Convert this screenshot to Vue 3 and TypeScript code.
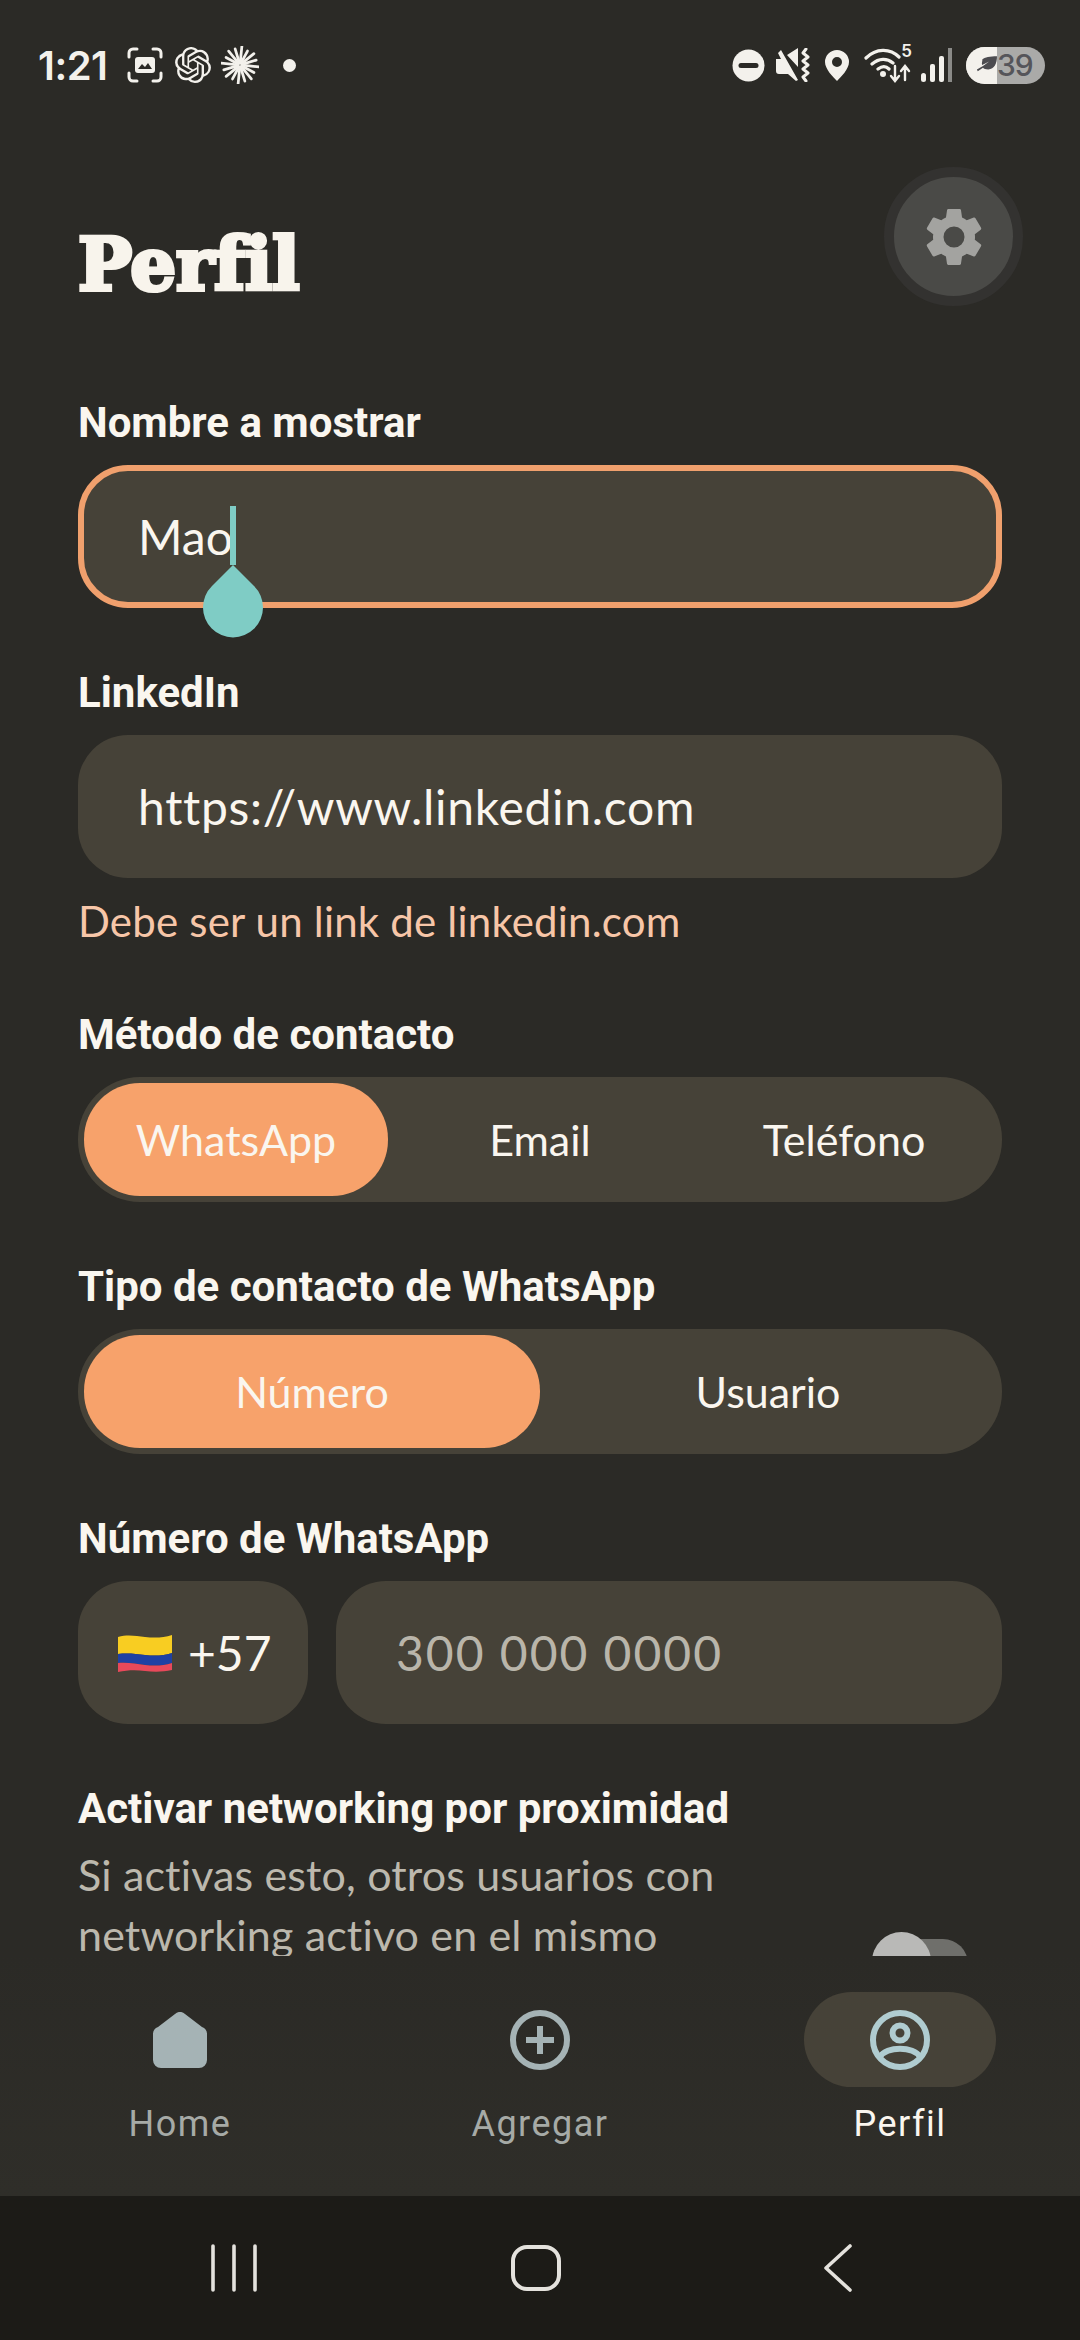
<script setup lang="ts">
const rays: number[][] = Array.from({ length: 16 }, (_, i) => {
  const a = (i * Math.PI) / 8 + 0.1
  const r = [18, 15, 17, 16][i % 4]
  return [18 + 2 * Math.cos(a), 18 + 2 * Math.sin(a), 18 + r * Math.cos(a), 18 + r * Math.sin(a)]
})
</script>

<template>
  <div class="screen">
    <header class="status">
      <div class="status-left">
        <span class="time">1:21</span>
        <svg class="capture" viewBox="0 0 36 36" fill="none">
          <path d="M2 10V6a4 4 0 0 1 4-4h4M26 2h4a4 4 0 0 1 4 4v4M34 26v4a4 4 0 0 1-4 4h-4M10 34H6a4 4 0 0 1-4-4v-4" stroke="#f3f1ec" stroke-width="3" stroke-linecap="round" />
          <rect x="8" y="10" width="20" height="16" rx="3" fill="#f3f1ec" />
          <path d="M11 22l4-5 3 3 3-4 4 6z" fill="#2b2a26" />
        </svg>
        <svg class="openai" viewBox="0 0 24 24" fill="#f3f1ec">
          <path d="M22.2819 9.8211a5.9847 5.9847 0 0 0-.5157-4.9108 6.0462 6.0462 0 0 0-6.5098-2.9A6.0651 6.0651 0 0 0 4.9807 4.1818a5.9847 5.9847 0 0 0-3.9977 2.9 6.0462 6.0462 0 0 0 .7427 7.0966 5.98 5.98 0 0 0 .511 4.9107 6.051 6.051 0 0 0 6.5146 2.9001A5.9847 5.9847 0 0 0 13.2599 24a6.0557 6.0557 0 0 0 5.7718-4.2058 5.9894 5.9894 0 0 0 3.9977-2.9001 6.0557 6.0557 0 0 0-.7475-7.0729zm-9.022 12.6081a4.4755 4.4755 0 0 1-2.8764-1.0408l.1419-.0804 4.7783-2.7582a.7948.7948 0 0 0 .3927-.6813v-6.7369l2.02 1.1686a.071.071 0 0 1 .038.052v5.5826a4.504 4.504 0 0 1-4.4945 4.4944zm-9.6607-4.1254a4.4708 4.4708 0 0 1-.5346-3.0137l.142.0852 4.783 2.7582a.7712.7712 0 0 0 .7806 0l5.8428-3.3685v2.3324a.0804.0804 0 0 1-.0332.0615L9.74 19.9502a4.4992 4.4992 0 0 1-6.1408-1.6464zM2.3408 7.8956a4.485 4.485 0 0 1 2.3655-1.9728V11.6a.7664.7664 0 0 0 .3879.6765l5.8144 3.3543-2.0201 1.1685a.0757.0757 0 0 1-.071 0l-4.8303-2.7865A4.504 4.504 0 0 1 2.3408 7.872zm16.5963 3.8558L13.1038 8.364 15.1192 7.2a.0757.0757 0 0 1 .071 0l4.8303 2.7913a4.4944 4.4944 0 0 1-.6765 8.1042v-5.6772a.79.79 0 0 0-.407-.667zm2.0107-3.0231l-.142-.0852-4.7735-2.7818a.7759.7759 0 0 0-.7854 0L9.409 9.2297V6.8974a.0662.0662 0 0 1 .0284-.0615l4.8303-2.7866a4.4992 4.4992 0 0 1 6.6802 4.66zM8.3065 12.863l-2.02-1.1638a.0804.0804 0 0 1-.038-.0567V6.0742a4.4992 4.4992 0 0 1 7.3757-3.4537l-.142.0805L8.704 5.459a.7948.7948 0 0 0-.3927.6813zm1.0976-2.3654l2.602-1.4998 2.6069 1.4998v2.9994l-2.5974 1.4997-2.6067-1.4997Z" />
        </svg>
        <svg class="spark" viewBox="0 0 36 36" stroke="#f3f1ec" stroke-width="2.6" stroke-linecap="round">
          <line v-for="(r, i) in rays" :key="i" :x1="r[0]" :y1="r[1]" :x2="r[2]" :y2="r[3]" />
        </svg>
        <span class="dot"></span>
      </div>
      <div class="status-right">
        <svg class="i-dnd" viewBox="0 0 33 33">
          <circle cx="16.5" cy="16.5" r="16" fill="#f3f1ec" />
          <rect x="6.5" y="14" width="20" height="5" rx="2.5" fill="#2b2a26" />
        </svg>
        <svg class="i-mute" viewBox="0 0 36 34" fill="none">
          <path d="M0 11h5L2 5l3-3 17 30-2 1-8-7H3a3 3 0 0 1-3-3z M11 7l11-7v19z" fill="#f3f1ec" />
          <path d="M30 1l-3 4 5 4-5 4 5 4-5 4 5 4-5 4 3 4" stroke="#f3f1ec" stroke-width="3" stroke-linecap="round" stroke-linejoin="round" />
        </svg>
        <svg class="i-pin" viewBox="0 0 24 31">
          <path fill-rule="evenodd" d="M12 0a12 12 0 0 1 12 12c0 7-8 15-12 19C8 27 0 19 0 12A12 12 0 0 1 12 0zm0 7a5 5 0 1 0 0 10 5 5 0 0 0 0-10z" fill="#f3f1ec" />
        </svg>
        <div class="wifi-wrap">
          <svg class="i-wifi" viewBox="0 0 48 36" fill="none" stroke="#f3f1ec" stroke-linecap="round">
            <path d="M2 11C12 1 26 1 35 10M8 17c7-6 15-6 21-1M14 22c4-3 8-3 11 0" stroke-width="3.2" />
            <circle cx="19" cy="27" r="3" fill="#f3f1ec" stroke="none" />
            <path d="M31 19v14M27 29l4 5 4-5M41 33V20M37 24l4-5 4 5" stroke-width="2.4" />
          </svg>
          <span class="wifi-num">5</span>
        </div>
        <svg class="i-signal" viewBox="0 0 31 34">
          <rect x="0" y="25" width="5" height="9" rx="2.5" fill="#f3f1ec" />
          <rect x="9" y="16" width="5" height="18" rx="2" fill="#f3f1ec" />
          <rect x="18" y="8" width="5" height="26" rx="2" fill="#f3f1ec" />
          <rect x="27" y="0" width="4" height="34" fill="#8b8b88" />
        </svg>
        <div class="battery">
          <span class="batt-fill">
            <svg viewBox="0 0 24 20" class="leaf">
              <path d="M7 4C10 1 16 0 24 0c0 8-3 15-10 15-3 0-5-1-6-2l-6 4-1-2 7-4 7-5-8 4c-1-3 1-5 0-6z" fill="#4c4c50" />
            </svg>
          </span>
          <span class="batt-num">39</span>
        </div>
      </div>
    </header>

    <main class="scroll">
      <h1 class="title">Perfil</h1>
      <button class="gear" type="button" aria-label="Ajustes">
        <svg viewBox="0 0 24 24" class="gear-i">
          <path fill-rule="evenodd" d="M19.14 12.94c.04-.3.06-.61.06-.94s-.02-.64-.07-.94l2.03-1.58a.5.5 0 0 0 .12-.61l-1.92-3.32a.5.5 0 0 0-.59-.22l-2.39.96a7 7 0 0 0-1.62-.94l-.36-2.54a.48.48 0 0 0-.48-.41h-3.84a.47.47 0 0 0-.47.41l-.36 2.54c-.59.24-1.13.57-1.62.94l-2.39-.96a.5.5 0 0 0-.59.22L2.74 8.87a.48.48 0 0 0 .12.61l2.03 1.58c-.05.3-.09.63-.09.94s.02.64.07.94l-2.03 1.58a.5.5 0 0 0-.12.61l1.92 3.32c.12.22.37.29.59.22l2.39-.96c.5.38 1.03.7 1.62.94l.36 2.54c.05.24.24.41.48.41h3.84c.24 0 .44-.17.47-.41l.36-2.54a7 7 0 0 0 1.62-.94l2.39.96c.22.08.47 0 .59-.22l1.92-3.32a.48.48 0 0 0-.12-.61zM12 15.6a3.6 3.6 0 1 1 0-7.2 3.6 3.6 0 0 1 0 7.2z" fill="#a3a3a0" />
        </svg>
      </button>

      <div class="form">
        <section class="field">
          <label class="label">Nombre a mostrar</label>
          <div class="input focus">
            <span class="value">Mao</span>
            <span class="caret"></span>
            <svg class="handle" viewBox="0 0 60 71">
              <path d="M30 0L51 21A30 30 0 1 1 9 21z" fill="#7fccc5" />
            </svg>
          </div>
        </section>

        <section class="field">
          <label class="label">LinkedIn</label>
          <div class="input"><span class="value link">https://www.linkedin.com</span></div>
          <p class="error">Debe ser un link de linkedin.com</p>
        </section>

        <section class="field">
          <label class="label">Método de contacto</label>
          <div class="segment">
            <span class="seg active">WhatsApp</span>
            <span class="seg">Email</span>
            <span class="seg">Teléfono</span>
          </div>
        </section>

        <section class="field">
          <label class="label">Tipo de contacto de WhatsApp</label>
          <div class="segment two">
            <span class="seg active">Número</span>
            <span class="seg">Usuario</span>
          </div>
        </section>

        <section class="field">
          <label class="label">Número de WhatsApp</label>
          <div class="phone">
            <div class="input country">
              <svg class="flag" viewBox="0 0 54 38">
                <path d="M0 3C10 0 18 2 27 3s18 1 27-2v18C45 22 36 22 27 21S10 19 0 20z" fill="#f8cd22" />
                <path d="M0 20C10 19 18 20 27 21s18 1 27-2v10c-9 3-18 3-27 2S10 28 0 29z" fill="#1f41a3" />
                <path d="M0 29c10-1 18 1 27 2s18 1 27-2v7c-9 2-18 2-27 1S10 36 0 38z" fill="#e8495a" />
              </svg>
              <span class="code">+57</span>
            </div>
            <div class="input number"><span class="placeholder">300 000 0000</span></div>
          </div>
        </section>

        <section class="field network">
          <div class="network-text">
            <label class="label tight">Activar networking por proximidad</label>
            <p class="desc">Si activas esto, otros usuarios con networking activo en el mismo</p>
          </div>
          <div class="toggle"><span class="track"></span><span class="thumb"></span></div>
        </section>
      </div>
    </main>

    <nav class="tabs">
      <div class="tab">
        <span class="tab-icon">
          <svg viewBox="0 0 54 56" class="ic-home">
            <path d="M22 2a7 7 0 0 1 10 0L49 15a8 8 0 0 1 5 8V48a8 8 0 0 1-8 8H8a8 8 0 0 1-8-8V23a8 8 0 0 1 5-8z" fill="#a5b3b5" />
          </svg>
        </span>
        <span class="tab-label">Home</span>
      </div>
      <div class="tab">
        <span class="tab-icon">
          <svg viewBox="0 0 60 60" class="ic" fill="none" stroke="#a5b3b5" stroke-width="6">
            <circle cx="30" cy="30" r="27" />
            <path d="M30 16v28M16 30h28" />
          </svg>
        </span>
        <span class="tab-label">Agregar</span>
      </div>
      <div class="tab on">
        <span class="tab-icon">
          <svg viewBox="0 0 60 60" class="ic" fill="none" stroke="#b0ccd0" stroke-width="6">
            <circle cx="30" cy="30" r="27" />
            <circle cx="30" cy="23" r="7.5" />
            <path d="M10 47C16 36 44 36 50 47" />
          </svg>
        </span>
        <span class="tab-label">Perfil</span>
      </div>
    </nav>

    <footer class="sysbar">
      <svg class="sys" viewBox="0 0 60 48" fill="none" stroke="#e4e2dd" stroke-width="3.6" stroke-linecap="round">
        <path d="M9 2v44M30 2v44M51 2v44" />
      </svg>
      <svg class="sys" viewBox="0 0 60 48" fill="none" stroke="#e4e2dd" stroke-width="4">
        <rect x="7" y="3" width="46" height="42" rx="14" />
      </svg>
      <svg class="sys" viewBox="0 0 60 48" fill="none" stroke="#e4e2dd" stroke-width="3.6" stroke-linecap="round" stroke-linejoin="round">
        <path d="M42 2L18 24l24 22" />
      </svg>
    </footer>
  </div>
</template>

<style>
html, body { margin: 0; background: #2b2a26; }
</style>

<style scoped>
.screen {
  width: 1080px;
  height: 2340px;
  display: flex;
  flex-direction: column;
  background: #2b2a26;
  color: #faf6ef;
  font-family: Lato, "Noto Sans", sans-serif;
  overflow: hidden;
}
.status {
  height: 130px;
  flex: none;
  display: flex;
  justify-content: space-between;
  align-items: center;
  padding: 0 35px 0 38px;
  box-sizing: border-box;
}
.status-left, .status-right { display: flex; align-items: center; }
.time {
  font-family: Inter, Roboto, sans-serif;
  font-weight: 600;
  font-size: 40px;
  width: 89px;
  color: #f3f1ec;
  letter-spacing: -0.5px;
}
.capture { width: 36px; height: 36px; }
.openai { width: 36px; height: 36px; margin-left: 12px; }
.spark { width: 38px; height: 38px; margin-left: 10px; }
.dot { width: 13px; height: 13px; border-radius: 50%; background: #f3f1ec; margin-left: 24px; }
.i-dnd { width: 33px; height: 33px; }
.i-mute { width: 36px; height: 34px; margin-left: 11px; }
.i-pin { width: 24px; height: 31px; margin-left: 13px; }
.wifi-wrap { position: relative; width: 48px; height: 36px; margin-left: 15px; }
.i-wifi { width: 48px; height: 36px; display: block; }
.wifi-num {
  position: absolute;
  right: 0;
  top: -6px;
  font-family: Inter, Roboto, sans-serif;
  font-weight: 600;
  font-size: 17px;
  line-height: 20px;
  color: #f3f1ec;
}
.i-signal { width: 31px; height: 34px; margin-left: 9px; }
.battery {
  margin-left: 14px;
  width: 79px;
  height: 37px;
  border-radius: 18.5px;
  overflow: hidden;
  display: flex;
  background: #aaaaa8;
}
.batt-fill {
  width: 31px;
  background: #f3f1ec;
  display: flex;
  align-items: center;
  justify-content: flex-end;
}
.leaf { width: 21px; height: 18px; }
.batt-num {
  font-family: Inter, Roboto, sans-serif;
  font-weight: 500;
  font-size: 30px;
  line-height: 37px;
  color: #55555a;
  letter-spacing: -1px;
}

.scroll {
  position: relative;
  flex: 1;
  min-height: 0;
  overflow: hidden;
  padding: 0 78px;
}
.title {
  margin: 93px 0 0;
  height: 179px;
  font-family: "DejaVu Serif", serif;
  font-weight: 700;
  font-size: 72px;
  line-height: 84px;
  font-variant-ligatures: none;
  color: #f8f4ec;
  -webkit-text-stroke: 4px #f8f4ec;
}
.gear {
  position: absolute;
  top: 37px;
  left: 884px;
  width: 139px;
  height: 139px;
  box-sizing: border-box;
  border: 10px solid #333230;
  border-radius: 50%;
  background: #4a4a47;
  padding: 0;
  display: flex;
  align-items: center;
  justify-content: center;
}
.gear-i { width: 70px; height: 70px; }

.form { display: flex; flex-direction: column; gap: 64px; }
.field { display: flex; flex-direction: column; }
.label {
  display: block;
  font-family: Roboto, sans-serif;
  font-weight: 700;
  font-size: 42px;
  line-height: 42px;
  margin-bottom: 21px;
  color: #faf6ef;
}
.label.tight { margin-bottom: 15px; }
.input {
  position: relative;
  height: 143px;
  box-sizing: border-box;
  border-radius: 50px;
  background: #464238;
  padding: 0 60px;
  display: flex;
  align-items: center;
  font-size: 48px;
}
.input.focus {
  border: 6px solid #f0a06d;
  padding: 0 54px;
  border-radius: 50px;
}
.value { color: #faf6ef; }
.value.link { letter-spacing: 0.7px; }
.caret {
  position: absolute;
  left: 146px;
  top: 35px;
  width: 6px;
  height: 59px;
  background: #7fccc5;
}
.handle {
  position: absolute;
  left: 119px;
  top: 94px;
  width: 60px;
  height: 71px;
  overflow: visible;
}
.error {
  margin: 22px 0 8px;
  font-size: 42px;
  line-height: 42px;
  letter-spacing: 0.2px;
  color: #f7c6a8;
}
.segment {
  height: 125px;
  box-sizing: border-box;
  padding: 6px;
  border-radius: 62px;
  background: #464238;
  display: grid;
  grid-template-columns: 1fr 1fr 1fr;
}
.segment.two { grid-template-columns: 1fr 1fr; }
.seg {
  display: flex;
  align-items: center;
  justify-content: center;
  font-size: 43px;
  border-radius: 56px;
  color: #faf6ef;
}
.seg.active { background: #f7a26b; }
.phone { display: flex; gap: 28px; }
.country {
  width: 230px;
  flex: none;
  padding: 0 0 0 40px;
}
.flag { width: 54px; height: 38px; flex: none; }
.code { margin-left: 16px; }
.number { flex: 1; }
.placeholder { color: #b9b5aa; letter-spacing: 2px; }
.network { flex-direction: row; justify-content: space-between; }
.network-text { width: 720px; }
.desc {
  margin: 0;
  font-size: 43px;
  line-height: 60px;
  letter-spacing: 0.15px;
  color: #bcb8ad;
  width: 680px;
}
.toggle {
  position: relative;
  width: 130px;
  height: 60px;
  margin-top: 144px;
  flex: none;
}
.track {
  position: absolute;
  left: 10px;
  right: 34px;
  top: 7px;
  height: 50px;
  border-radius: 25px;
  background: #6f6f6b;
}
.thumb {
  position: absolute;
  left: 0;
  top: 0;
  width: 59px;
  height: 59px;
  border-radius: 50%;
  background: #b9b9b7;
}

.tabs {
  flex: none;
  height: 240px;
  background: linear-gradient(#2b2a26, #2f2e29);
  display: grid;
  grid-template-columns: repeat(3, 360px);
}
.tab {
  display: flex;
  flex-direction: column;
  align-items: center;
  padding-top: 36px;
}
.tab-icon {
  width: 192px;
  height: 95px;
  border-radius: 48px;
  display: flex;
  align-items: center;
  justify-content: center;
}
.on .tab-icon { background: #464238; }
.ic { width: 60px; height: 60px; }
.ic-home { width: 54px; height: 56px; }
.tab-label {
  margin-top: 17px;
  font-family: Roboto, sans-serif;
  font-size: 36px;
  line-height: 40px;
  letter-spacing: 1.5px;
  color: #a6aaa6;
}
.on .tab-label { color: #faf6ef; }
.sysbar {
  flex: none;
  height: 144px;
  background: #1c1b17;
  display: grid;
  grid-template-columns: repeat(3, 302px);
  padding-left: 83px;
  align-items: center;
  justify-items: center;
}
.sys { width: 60px; height: 48px; }
</style>
